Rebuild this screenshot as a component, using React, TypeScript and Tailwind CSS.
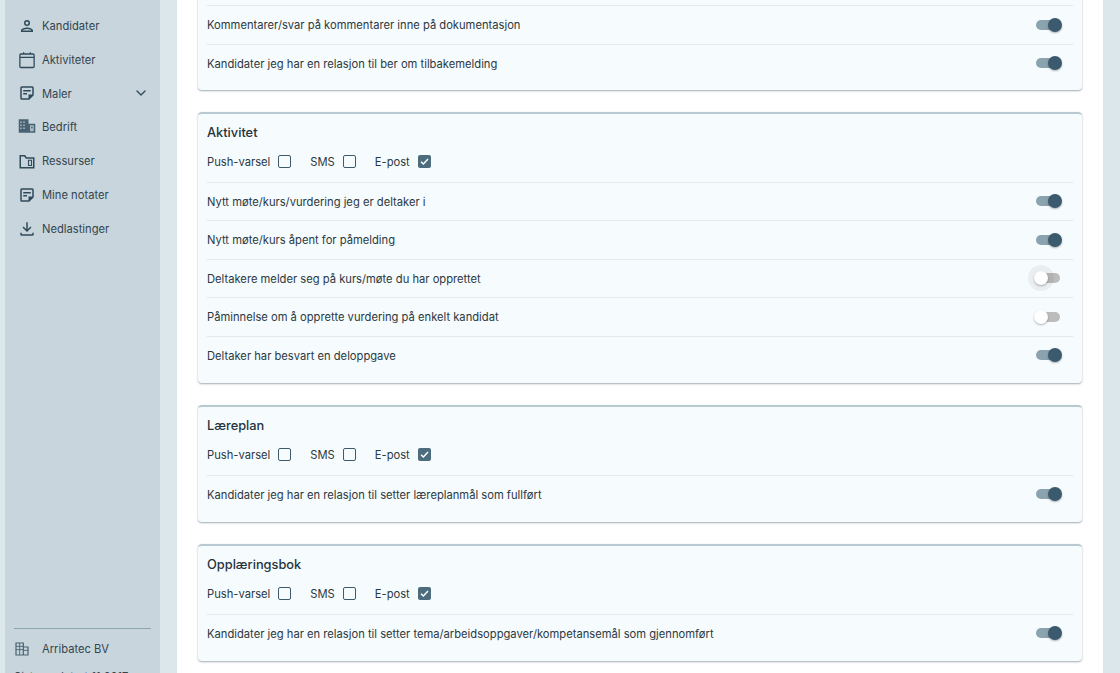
import React from "react";
import { ChevronDown } from "lucide-react";

type Section = {
  title?: string;
  rows: { label: string; on: boolean; focus?: boolean }[];
};

const sections: Section[] = [
  {
    title: "Aktivitet",
    rows: [
      { label: "Nytt møte/kurs/vurdering jeg er deltaker i", on: true },
      { label: "Nytt møte/kurs åpent for påmelding", on: true },
      { label: "Deltakere melder seg på kurs/møte du har opprettet", on: false, focus: true },
      { label: "Påminnelse om å opprette vurdering på enkelt kandidat", on: false },
      { label: "Deltaker har besvart en deloppgave", on: true },
    ],
  },
  {
    title: "Læreplan",
    rows: [{ label: "Kandidater jeg har en relasjon til setter læreplanmål som fullført", on: true }],
  },
  {
    title: "Opplæringsbok",
    rows: [
      {
        label: "Kandidater jeg har en relasjon til setter tema/arbeidsoppgaver/kompetansemål som gjennomført",
        on: true,
      },
    ],
  },
];

const NoteIcon = () => (
  <svg viewBox="0 0 24 24" className="w-[18px] h-[18px]" fill="#2f4a5a">
    <path d="M19 3H5a2 2 0 0 0-2 2v14a2 2 0 0 0 2 2h10l6-6V5a2 2 0 0 0-2-2zM5 19V5h14v9h-5v5H5zm2-9h10V8H7v2zm0 4h5v-2H7v2z" />
  </svg>
);

const navItems: { label: string; icon: React.ReactNode; chevron?: boolean }[] = [
  {
    label: "Kandidater",
    icon: (
      <svg viewBox="0 0 24 24" className="w-[18px] h-[18px]" fill="#2f4a5a">
        <path d="M12 6a2 2 0 1 1 0 4 2 2 0 0 1 0-4m0 10c2.700 0 5.800 1.300 6 2H6c.2-.7 3.300-2 6-2M12 4a4 4 0 1 0 0 8 4 4 0 0 0 0-8zm0 10c-2.700 0-8 1.300-8 4v2h16v-2c0-2.700-5.300-4-8-4z" />
      </svg>
    ),
  },
  {
    label: "Aktiviteter",
    icon: (
      <svg viewBox="0 0 24 24" className="w-[18px] h-[18px]" fill="none" stroke="#2f4a5a" strokeWidth="1.700">
        <rect x="2.500" y="4" width="19" height="18" rx="1.500" />
        <path d="M2.500 8.500h19M7.500 1.500V4M16.500 1.500V4" />
      </svg>
    ),
  },
  { label: "Maler", icon: <NoteIcon />, chevron: true },
  {
    label: "Bedrift",
    icon: (
      <svg viewBox="0 0 24 24" className="w-[18px] h-[18px] -mt-[3px]" fill="#4a6372">
        <path d="M1 3h13v18H1zM14 9h9v12h-9z" />
        <path d="M3 6h2v2H3zM7 6h2v2H7zM3 10h2v2H3zM7 10h2v2H7zM3 14h2v2H3zM7 14h2v2H7zM16 11h5v8h-5z" fill="#a9bac4" />
        <path d="M17.500 13h2v2h-2z" fill="#4a6372" />
      </svg>
    ),
  },
  {
    label: "Ressurser",
    icon: (
      <svg viewBox="0 0 24 24" className="w-[18px] h-[18px]" fill="none" stroke="#2f4a5a" strokeWidth="2">
        <path d="M3 5h6l2 3h10v13H3z" />
        <path d="M14 11h4v7h-4z" strokeWidth="1.500" />
      </svg>
    ),
  },
  { label: "Mine notater", icon: <NoteIcon /> },
  {
    label: "Nedlastinger",
    icon: (
      <svg viewBox="0 0 24 24" className="w-[18px] h-[18px]" fill="#2f4a5a">
        <path d="M19 17v2H5v-2H3v2a2 2 0 0 0 2 2h14a2 2 0 0 0 2-2v-2h-2zM18 10l-1.400-1.400L13 12.200V3h-2v9.200L7.400 8.600 6 10l6 6 6-6z" />
      </svg>
    ),
  },
];

function Toggle({ on, focus }: { on: boolean; focus?: boolean }) {
  return (
    <div className="relative w-[28px] h-[14px] mr-[11px]">
      <div
        className={`absolute left-[2px] top-[2px] w-6 h-[10px] rounded-full ${on ? "bg-[#8ba3af]" : "bg-[#bcbcbc]"}`}
      />
      {focus && <div className="absolute left-[-6px] top-[-6px] w-[26px] h-[26px] rounded-full bg-black/5" />}
      <div
        className={`absolute top-0 w-[14px] h-[14px] rounded-full shadow-[0_1px_2px_rgba(0,0,0,0.3)] ${
          on ? "right-0 bg-[#3b5a6d]" : "left-0 bg-white"
        }`}
      />
    </div>
  );
}

function Check({ label, checked }: { label: string; checked?: boolean }) {
  return (
    <div className="flex items-center gap-[8px]">
      <span>{label}</span>
      {checked ? (
        <div className="w-[13px] h-[13px] rounded-[2px] bg-[#4d6c7e] flex items-center justify-center">
          <svg viewBox="0 0 12 12" className="w-[11px] h-[11px]" fill="none" stroke="#fff" strokeWidth="1.600">
            <path d="M2.200 6.200 4.800 8.800 9.800 3.400" />
          </svg>
        </div>
      ) : (
        <div className="w-[13px] h-[13px] rounded-[2px] border-[1.500px] border-[#3f5a6a]" />
      )}
    </div>
  );
}

function Row({ label, on, focus }: { label: string; on: boolean; focus?: boolean }) {
  return (
    <div className="h-[38.500px] flex items-center justify-between border-t border-[#e3e9ed]">
      <span className="pt-[2px]">{label}</span>
      <Toggle on={on} focus={focus} />
    </div>
  );
}

function Card({ section }: { section: Section }) {
  return (
    <section className="bg-[#f6fbfe] rounded-[4px] border-t-2 border-[#b9c9d2] shadow-[0_1px_2px_rgba(50,70,85,0.45)] px-[9px] pt-[10px] pb-[8.500px]">
      <h2 className="text-[12.800px] leading-[18px] font-medium text-[#26333b]">{section.title}</h2>
      <div className="flex items-center gap-[19px] h-[29px] mt-[6px] mb-[5px]">
        <Check label="Push-varsel" />
        <Check label="SMS" />
        <Check label="E-post" checked />
      </div>
      {section.rows.map((r) => (
        <Row key={r.label} {...r} />
      ))}
    </section>
  );
}

export default function App() {
  return (
    <div
      className="h-screen overflow-hidden flex bg-[#dce7ec] text-[11.200px] text-[#2b3940]"
      style={{ fontFamily: "Inter, 'Liberation Sans', sans-serif" }}
    >
      <aside className="w-[155px] ml-[5px] shrink-0 bg-[#c8d5dc] flex flex-col">
        <nav className="pt-[9px] pl-[13px] pr-[11px] flex-1">
          {navItems.map((item) => (
            <div key={item.label} className="h-[33.800px] flex items-center text-[#33464f]">
              <div className="w-[18px] flex items-center justify-start shrink-0">{item.icon}</div>
              <span className="ml-[6px] flex-1 pt-[1px]">{item.label}</span>
              {item.chevron && <ChevronDown className="w-[16px] h-[16px]" color="#2f4a5a" />}
            </div>
          ))}
        </nav>
        <div className="mx-[9px] border-t border-[#8fa5b2] pt-[10px] h-[45px]">
          <div className="flex items-center h-[20px] text-[#33464f]">
            <svg viewBox="0 0 24 24" className="w-[16px] h-[16px]" fill="none" stroke="#4a6372" strokeWidth="1.800">
              <path d="M3 3h11v18H3zM14 9h7v12h-7z" />
              <path d="M3 8h11M3 13h11M8.500 3v18M14 14h7" strokeWidth="1.400" />
            </svg>
            <span className="ml-[12px]">Arribatec BV</span>
          </div>
          <div className="mt-[10px] text-[#33464f] whitespace-nowrap">Sist oppdatert 11 2017</div>
        </div>
      </aside>
      <div className="w-[17px] shrink-0" />
      <main className="w-[926px] shrink-0 bg-white px-[21px]">
        <div className="-mt-[20px] flex flex-col gap-[22px]">
          <section className="bg-[#f6fbfe] rounded-[4px] shadow-[0_1px_2px_rgba(50,70,85,0.45)] px-[9px] pt-[25px] pb-[7.500px]">
            <Row label="Kommentarer/svar på kommentarer inne på dokumentasjon" on />
            <Row label="Kandidater jeg har en relasjon til ber om tilbakemelding" on />
          </section>
          {sections.map((s) => (
            <Card key={s.title} section={s} />
          ))}
        </div>
      </main>
    </div>
  );
}
